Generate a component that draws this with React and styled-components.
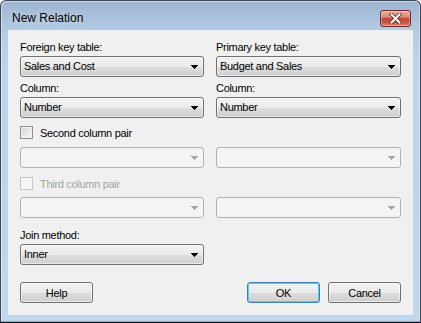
import React from 'react';
import styled, { createGlobalStyle, css } from 'styled-components';

const Global = createGlobalStyle`
  html, body { margin: 0; padding: 0; background: #fff; }
  body { font-family: "Liberation Sans", Arial, sans-serif; }
`;

const Window = styled.div`
  box-sizing: border-box;
  width: 421px;
  height: 323px;
  border: 1px solid #39495a;
  border-bottom-color: #111;
  border-radius: 6px 6px 0 0;
  background: linear-gradient(180deg, #9db5d0 0px, #b3cae3 28px, #bdd4ec 60px, #c0d7ee 100%);
  box-shadow: inset 0 -1px 0 #4cc4ec, inset 1px 1px 0 rgba(255,255,255,.45), inset -1px 0 0 rgba(255,255,255,.3);
  display: flex;
  flex-direction: column;
`;

const TitleBar = styled.div`
  display: flex;
  align-items: center;
  justify-content: space-between;
  height: 17px;
  margin: 9px 9px 3px 11px;
`;

const Title = styled.span`
  font-size: 12px;
  line-height: 15px;
  color: #000;
  text-shadow: 0 0 6px rgba(255,255,255,.6);
`;

const CloseButton = styled.div`
  box-sizing: border-box;
  width: 31px;
  height: 17px;
  border: 1px solid #6b2a24;
  border-radius: 3px;
  background: linear-gradient(180deg, #e9aa9b 0%, #dc8a78 40%, #c4473a 50%, #c9503f 75%, #dc836d 100%);
  box-shadow: inset 0 0 0 1px rgba(255,255,255,.35);
  display: flex;
  align-items: center;
  justify-content: center;
`;

const Client = styled.div`
  box-sizing: border-box;
  height: 285px;
  margin: 0 7px;
  background: #f0f0f0;
  padding: 11px 12px 0 12px;
  display: flex;
  flex-direction: column;
`;

const PairRow = styled.div`
  display: grid;
  grid-template-columns: 184px 185px;
  column-gap: 12px;
  margin-top: ${p => p.$top || 0}px;
`;

const Field = styled.div`
  display: flex;
  flex-direction: column;
  margin-top: ${p => p.$top || 0}px;
  width: ${p => p.$width ? p.$width + 'px' : 'auto'};
`;

const textBase = css`
  font-size: 11px;
  letter-spacing: -0.3px;
`;

const Label = styled.div`
  ${textBase};
  line-height: 13px;
  margin-bottom: 2px;
  color: #000;
`;

const Combo = styled.div`
  box-sizing: border-box;
  height: 21px;
  border: 1px solid ${p => p.$disabled ? '#adb2b5' : '#707070'};
  border-radius: 3px;
  background: ${p => p.$disabled
    ? '#f4f4f4'
    : 'linear-gradient(180deg, #f2f2f2 0%, #ebebeb 50%, #dddddd 51%, #cfcfcf 100%)'};
  box-shadow: ${p => p.$disabled ? 'none' : 'inset 0 0 0 1px rgba(255,255,255,.55)'};
  display: flex;
  align-items: center;
  padding: 0 5px 0 3px;
  ${textBase};
  color: #000;
`;

const ComboValue = styled.span`
  flex: 1;
  line-height: 13px;
`;

const CheckRow = styled.label`
  display: flex;
  align-items: center;
  height: 13px;
  margin-top: ${p => p.$top || 0}px;
  ${textBase};
  color: ${p => p.$disabled ? '#a3a3a3' : '#000'};
`;

const CheckBox = styled.span`
  box-sizing: border-box;
  width: 13px;
  height: 13px;
  margin-right: 7px;
  border: 1px solid ${p => p.$disabled ? '#c5c5c5' : '#8e8f8f'};
  background: ${p => p.$disabled
    ? '#f4f4f4'
    : 'linear-gradient(135deg, #cdd0d4 0%, #e6e7e9 50%, #f8f8f8 100%)'};
  box-shadow: inset 0 0 0 1px ${p => p.$disabled ? '#f7f7f7' : '#f3f3f3'};
`;

const ButtonRow = styled.div`
  display: flex;
  margin-top: 17px;
`;

const Spacer = styled.div`
  flex: 1;
`;

const Button = styled.div`
  box-sizing: border-box;
  width: 73px;
  height: 21px;
  margin-left: ${p => p.$gap || 0}px;
  border: 1px solid ${p => p.$default ? '#3c7fb1' : '#707070'};
  border-radius: 3px;
  background: linear-gradient(180deg, #f2f2f2 0%, #ebebeb 50%, #dddddd 51%, #cfcfcf 100%);
  box-shadow: inset 0 0 0 1px ${p => p.$default ? '#48d3f7' : 'rgba(255,255,255,.6)'};
  display: flex;
  align-items: center;
  justify-content: center;
  ${textBase};
  color: #000;
`;

const Arrow = ({ disabled }) => (
  <svg width="7" height="4" viewBox="0 0 7 4">
    <path
      d="M0 0h7v1H0z M1 1h5v1H1z M2 2h3v1H2z M3 3h1v1H3z"
      fill={disabled ? '#a6a6a6' : '#000'}
    />
  </svg>
);

const Select = ({ value, disabled }) => (
  <Combo $disabled={disabled}>
    <ComboValue>{value}</ComboValue>
    <Arrow disabled={disabled} />
  </Combo>
);

const CloseGlyph = () => (
  <svg width="13" height="11" viewBox="0 0 13 11">
    <path d="M2.5 1.5 L10.5 9.5 M10.5 1.5 L2.5 9.5" stroke="#5a2a26" strokeWidth="3.6" strokeLinecap="square" />
    <path d="M2.5 1.5 L10.5 9.5 M10.5 1.5 L2.5 9.5" stroke="#fff" strokeWidth="2" strokeLinecap="square" />
  </svg>
);

export default function App() {
  return (
    <>
      <Global />
      <Window>
        <TitleBar>
          <Title>New Relation</Title>
          <CloseButton><CloseGlyph /></CloseButton>
        </TitleBar>
        <Client>
          <PairRow>
            <Field>
              <Label>Foreign key table:</Label>
              <Select value="Sales and Cost" />
            </Field>
            <Field>
              <Label>Primary key table:</Label>
              <Select value="Budget and Sales" />
            </Field>
          </PairRow>
          <PairRow $top={5}>
            <Field>
              <Label>Column:</Label>
              <Select value="Number" />
            </Field>
            <Field>
              <Label>Column:</Label>
              <Select value="Number" />
            </Field>
          </PairRow>
          <CheckRow $top={8}>
            <CheckBox />
            Second column pair
          </CheckRow>
          <PairRow $top={8}>
            <Select disabled />
            <Select disabled />
          </PairRow>
          <CheckRow $top={9} $disabled>
            <CheckBox $disabled />
            Third column pair
          </CheckRow>
          <PairRow $top={7}>
            <Select disabled />
            <Select disabled />
          </PairRow>
          <Field $top={11} $width={184}>
            <Label>Join method:</Label>
            <Select value="Inner" />
          </Field>
          <ButtonRow>
            <Button>Help</Button>
            <Spacer />
            <Button $default>OK</Button>
            <Button $gap={8}>Cancel</Button>
          </ButtonRow>
        </Client>
      </Window>
    </>
  );
}
